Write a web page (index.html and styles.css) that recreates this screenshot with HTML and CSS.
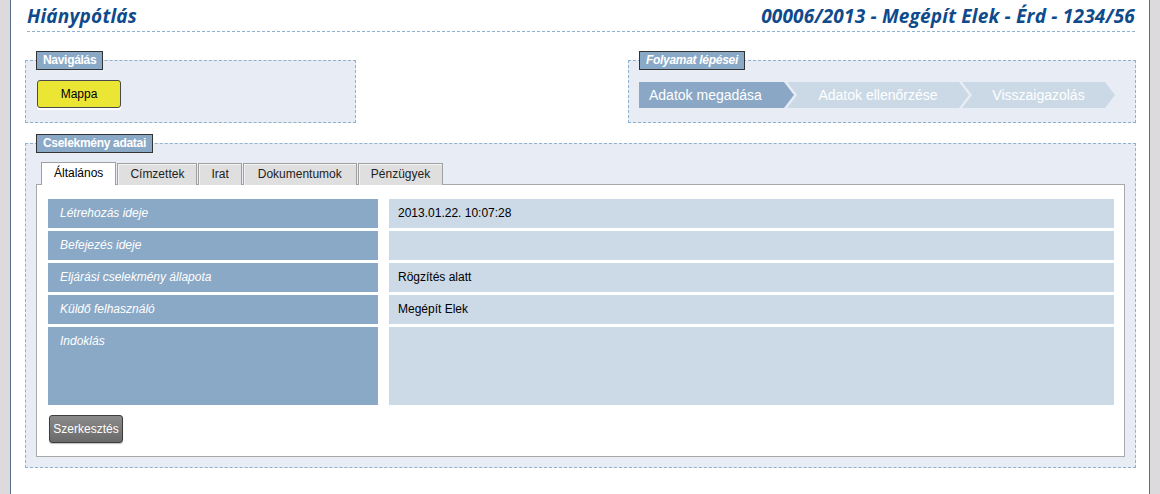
FILE: index.html
```html
<!DOCTYPE html>
<html lang="hu">
<head>
<meta charset="utf-8">
<title>Hiánypótlás</title>
<link rel="stylesheet" href="styles.css">
</head>
<body>
<div class="page">
  <div class="header">
    <h1 class="title">Hiánypótlás</h1>
    <div class="case">00006/2013 - Megépít Elek - Érd - 1234/56</div>
  </div>

  <div class="top-row">
    <fieldset class="box nav-box">
      <legend class="legend">Navigálás</legend>
      <div class="nav-content">
        <button class="btn-yellow" type="button">Mappa</button>
      </div>
    </fieldset>

    <fieldset class="box steps-box">
      <legend class="legend legend-italic">Folyamat lépései</legend>
      <div class="steps">
        <div class="step step-first step-active">Adatok megadása</div>
        <div class="step step-mid">Adatok ellenőrzése</div>
        <div class="step step-last">Visszaigazolás</div>
      </div>
    </fieldset>
  </div>

  <fieldset class="box data-box">
    <legend class="legend">Cselekmény adatai</legend>
    <div class="data-content">
      <div class="tabs">
        <div class="tab tab-active">Általános</div>
        <div class="tab">Címzettek</div>
        <div class="tab">Irat</div>
        <div class="tab tab-wide">Dokumentumok</div>
        <div class="tab">Pénzügyek</div>
      </div>
      <div class="panel">
        <div class="rows">
          <div class="row">
            <div class="label">Létrehozás ideje</div>
            <div class="value">2013.01.22. 10:07:28</div>
          </div>
          <div class="row">
            <div class="label">Befejezés ideje</div>
            <div class="value"></div>
          </div>
          <div class="row">
            <div class="label">Eljárási cselekmény állapota</div>
            <div class="value">Rögzítés alatt</div>
          </div>
          <div class="row">
            <div class="label">Küldő felhasználó</div>
            <div class="value">Megépít Elek</div>
          </div>
          <div class="row row-tall">
            <div class="label">Indoklás</div>
            <div class="value"></div>
          </div>
        </div>
        <button class="btn-gray" type="button">Szerkesztés</button>
      </div>
    </div>
  </fieldset>
</div>
</body>
</html>
```

FILE: styles.css
```css
* {
  box-sizing: border-box;
}

html, body {
  margin: 0;
  padding: 0;
}

body {
  background: #dcdadd;
  font-family: "Liberation Sans", Arial, sans-serif;
  font-size: 12px;
  color: #000;
}

.page {
  margin: 0 10px;
  min-height: 494px;
  background: #fff;
  border-left: 1px solid #5b6f8a;
  border-right: 1px solid #5b6f8a;
  padding: 0 13px 0 14px;
}

.header {
  display: flex;
  justify-content: space-between;
  align-items: flex-end;
  margin: 0 1px 0 2px;
  height: 32px;
  border-bottom: 1px dashed #8fb0ce;
  padding-bottom: 3px;
}

.title,
.case {
  margin: 0;
  font-family: "Open Sans", "DejaVu Sans", sans-serif;
  font-weight: 700;
  font-style: italic;
  font-size: 19px;
  letter-spacing: 0.2px;
  line-height: 24px;
  color: #0f4a8b;
}

.top-row {
  display: flex;
  justify-content: space-between;
  align-items: stretch;
  margin-top: 19px;
}

.box {
  margin: 0;
  min-width: 0;
  border: 1px dashed #8fb0ce;
  background: #e8edf5;
  padding: 0;
}

.legend {
  margin-left: 10px;
  padding: 0 6px;
  height: 19px;
  line-height: 17px;
  background: #8aa9c7;
  border: 1px solid #333;
  color: #fff;
  font-weight: 700;
  font-size: 12px;
  letter-spacing: -0.3px;
}

.legend-italic {
  font-style: italic;
}

.nav-box {
  width: 331px;
}

.nav-content {
  padding: 10px 11px 14px;
}

.btn-yellow {
  display: block;
  width: 84px;
  height: 28px;
  margin: 0;
  padding: 0;
  background: #ebe533;
  border: 1px solid #4a4a4a;
  border-radius: 3px;
  box-shadow: 0 2px 0 #fff;
  font-family: "Liberation Sans", Arial, sans-serif;
  font-size: 12px;
  color: #000;
}

.steps-box {
  width: 508px;
}

.steps {
  display: flex;
  padding: 12px 10px 14px;
}

.step {
  height: 26px;
  line-height: 26px;
  font-size: 14px;
  color: #fff;
  background: #cbd9e6;
  text-align: center;
  white-space: nowrap;
}

.step-active {
  background: #8aa8c6;
}

.step-first {
  width: 155px;
  text-align: left;
  padding-left: 10px;
  clip-path: polygon(0 0, calc(100% - 10px) 0, 100% 50%, calc(100% - 10px) 100%, 0 100%);
}

.step-mid {
  width: 182px;
  margin-left: -7px;
  clip-path: polygon(0 0, calc(100% - 10px) 0, 100% 50%, calc(100% - 10px) 100%, 0 100%, 10px 50%);
}

.step-last {
  width: 153px;
  margin-left: -7px;
  clip-path: polygon(0 0, calc(100% - 10px) 0, 100% 50%, calc(100% - 10px) 100%, 0 100%, 10px 50%);
}

.data-box {
  margin-top: 11px;
}

.data-content {
  padding: 9px 10px 10px;
}

.tabs {
  display: flex;
  align-items: flex-end;
  gap: 1px;
  padding-left: 5px;
  position: relative;
  z-index: 1;
  margin-bottom: -1px;
}

.tab {
  height: 22px;
  line-height: 21px;
  padding: 0 12px;
  background: #dfdfdf;
  border: 1px solid #a0a0a0;
  border-bottom: none;
  box-shadow: inset 1px 1px 0 #f3f3f3;
  color: #222;
  white-space: nowrap;
}

.tab-wide {
  padding: 0 14px;
}

.tab-active {
  height: 23px;
  background: #fff;
  box-shadow: none;
  color: #000;
}

.panel {
  background: #fff;
  border: 1px solid #a8a8a8;
  padding: 14px 10px 13px 11px;
}

.rows {
  display: flex;
  flex-direction: column;
  gap: 3px;
}

.row {
  display: flex;
  gap: 11px;
  height: 29px;
}

.row-tall {
  height: 78px;
}

.label {
  width: 330px;
  flex: none;
  background: #8aa9c6;
  color: #fff;
  font-style: italic;
  padding: 6px 0 0 12px;
  line-height: 16px;
}

.value {
  flex: 1;
  background: #ccd9e6;
  color: #000;
  padding: 6px 0 0 9px;
  line-height: 16px;
}

.btn-gray {
  display: block;
  margin: 10px 0 0 1px;
  width: 74px;
  height: 28px;
  padding: 0;
  background: linear-gradient(#8a8a8a, #6a6a6a);
  border: 1px solid #3e3e3e;
  border-radius: 3px;
  box-shadow: 0 1px 1px rgba(0, 0, 0, 0.25);
  font-family: "Liberation Sans", Arial, sans-serif;
  font-size: 12px;
  color: #fff;
}
```
